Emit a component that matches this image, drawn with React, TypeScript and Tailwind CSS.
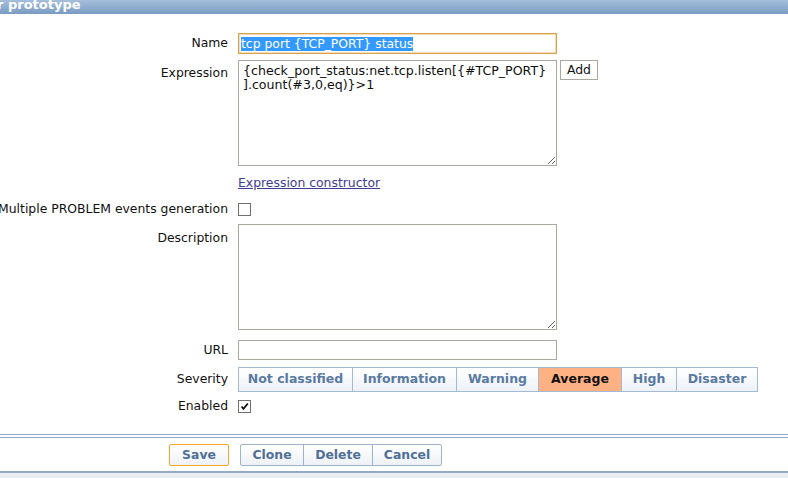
import React from "react";

function CheckBox({ checked }: { checked?: boolean }) {
  return (
    <div className="w-[13px] h-[13px] border border-[#707070] bg-white flex items-center justify-center">
      {checked && (
        <svg width="9" height="9" viewBox="0 0 9 9">
          <path d="M1.5 4.5 L3.5 6.8 L7.8 1.5" fill="none" stroke="#111" strokeWidth="1.8" />
        </svg>
      )}
    </div>
  );
}

const sev = [
  { t: "Not classified", w: "w-[115px]" },
  { t: "Information", w: "w-[105px]" },
  { t: "Warning", w: "w-[83px]" },
  { t: "Average", w: "w-[84px]", active: true },
  { t: "High", w: "w-[56px]" },
  { t: "Disaster", w: "w-[82px]" },
];

export default function App() {
  return (
    <div className="w-[788px] h-[478px] bg-white overflow-hidden flex flex-col font-['DejaVu_Sans',sans-serif] text-[12.4px] text-[#111]">
      <div className="h-[14px] shrink-0 bg-gradient-to-b from-[#a5bfdb] to-[#7a9bc2] overflow-hidden">
        <div className="-mt-[2px] -ml-[3px] text-white font-bold text-[13px] leading-[14px] whitespace-nowrap">
          r prototype
        </div>
      </div>

      <div className="grid grid-cols-[228px_1fr] gap-x-[10px] mt-[19px]">
        {/* Name */}
        <div className="h-[21px] flex items-center justify-end whitespace-nowrap">Name</div>
        <div className="h-[21px] w-[319px] border border-[#d9a04e] shadow-[inset_0_0_0_1px_#f6dcb5] flex items-center px-[2px]">
          <span className="bg-[#3399ff] text-white leading-[14px] whitespace-nowrap">tcp port {"{TCP_PORT}"} status</span>
        </div>

        {/* Expression */}
        <div className="mt-[6px] pt-[4px] flex justify-end">Expression</div>
        <div className="mt-[6px] flex items-start">
          <textarea
            readOnly
            className="w-[319px] h-[106px] border border-[#a9a9a0] pl-[4px] pr-[1px] py-[3px] leading-[14px] text-[12.6px] outline-none font-['DejaVu_Sans',sans-serif] text-[#111] resize"
            value={"{check_port_status:net.tcp.listen[{#TCP_PORT}\n].count(#3,0,eq)}>1"}
          />
          <div className="ml-[3px] w-[38px] h-[20px] border border-[#a9a9a0] bg-white flex items-center justify-center">Add</div>
        </div>

        {/* link */}
        <div className="mt-[7px] h-[20px]" />
        <div className="mt-[7px] h-[20px] flex items-center">
          <span className="underline text-[#3e3c97]">Expression constructor</span>
        </div>

        {/* Multiple */}
        <div className="mt-[6px] h-[20px] flex items-center justify-end whitespace-nowrap">Multiple PROBLEM events generation</div>
        <div className="mt-[6px] h-[20px] flex items-center">
          <CheckBox />
        </div>

        {/* Description */}
        <div className="mt-[5px] pt-[5px] flex justify-end">Description</div>
        <div className="mt-[5px] flex">
          <textarea
            readOnly
            className="w-[319px] h-[106px] border border-[#a9a9a0] outline-none resize"
            value=""
          />
        </div>

        {/* URL */}
        <div className="mt-[10px] h-[20px] flex items-center justify-end">URL</div>
        <div className="mt-[10px] h-[20px] w-[319px] border border-[#a9a9a0]" />

        {/* Severity */}
        <div className="mt-[7px] h-[25px] flex items-center justify-end">Severity</div>
        <div className="mt-[7px] h-[25px] flex">
          {sev.map((s, i) => (
            <div
              key={s.t}
              className={
                s.w +
                " h-[25px] flex items-center justify-center font-bold text-[12.5px] border border-[#a4b9d3] " +
                (i > 0 ? "-ml-px " : "") +
                (s.active
                  ? "bg-[#ffb183] text-[#111] relative"
                  : "bg-gradient-to-b from-[#ffffff] to-[#edf2f7] text-[#5a7aa2]")
              }
            >
              {s.t}
            </div>
          ))}
        </div>

        {/* Enabled */}
        <div className="mt-[4px] h-[20px] flex items-center justify-end">Enabled</div>
        <div className="mt-[4px] h-[20px] flex items-center">
          <CheckBox checked />
        </div>
      </div>

      {/* footer */}
      <div className="mt-[18px] border-t border-[#94a9c3]" />
      <div className="mt-[2px] border-t border-[#94a9c3] flex pt-[6px] pb-[5px] border-b">
        <div className="w-[229px] flex justify-end">
          <div className="w-[60px] h-[22px] rounded-[2px] border border-[#f5a623] bg-gradient-to-b from-[#ffffff] to-[#eef2f6] flex items-center justify-center font-bold text-[#4f6f98]">
            Save
          </div>
        </div>
        <div className="ml-[11px] flex h-[22px] rounded-[2px] border border-[#9fb3cc] bg-gradient-to-b from-[#ffffff] to-[#eef2f6] font-bold text-[#4f6f98]">
          <div className="w-[63px] flex items-center justify-center border-r border-[#9fb3cc]">Clone</div>
          <div className="w-[69px] flex items-center justify-center border-r border-[#9fb3cc]">Delete</div>
          <div className="w-[68px] flex items-center justify-center">Cancel</div>
        </div>
      </div>
      <div className="border-t border-[#94a9c3] flex-1 bg-[#e9eef3]" />
    </div>
  );
}
